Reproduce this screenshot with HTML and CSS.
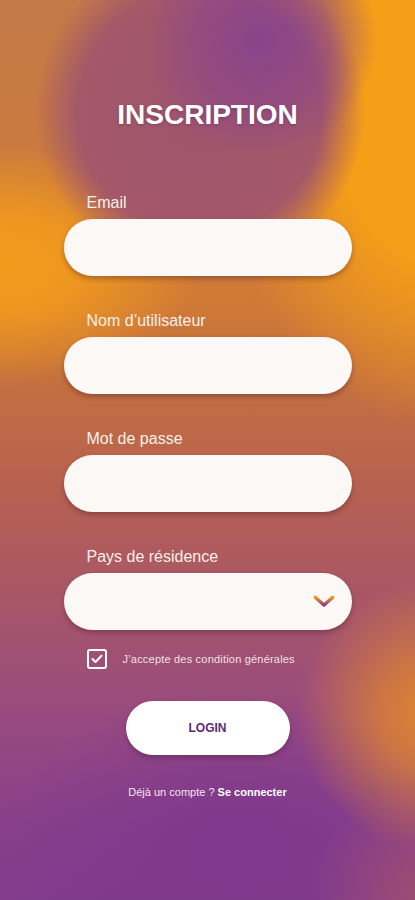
FILE: index.html
```html
<!DOCTYPE html>
<html lang="fr">
<head>
    <meta charset="UTF-8">
    <meta name="viewport" content="width=device-width, initial-scale=1.0">
    <title>Inscription</title>
    <link rel="stylesheet" href="styles.css">
</head>
<body>
    <main class="page">
        <h1 class="title">INSCRIPTION</h1>

        <form class="form">
            <div class="group">
                <label class="label" for="email">Email</label>
                <input class="field" type="email" id="email">
            </div>
            <div class="group">
                <label class="label" for="username">Nom d’utilisateur</label>
                <input class="field" type="text" id="username">
            </div>
            <div class="group">
                <label class="label" for="password">Mot de passe</label>
                <input class="field" type="password" id="password">
            </div>
            <div class="group">
                <label class="label" for="country">Pays de résidence</label>
                <div class="field select" id="country">
                    <svg width="22" height="13" viewBox="0 0 22 13">
                        <defs>
                            <linearGradient id="chev" x1="0" y1="0" x2="0" y2="1">
                                <stop offset="0" stop-color="#ec962a"/>
                                <stop offset="1" stop-color="#8b4278"/>
                            </linearGradient>
                        </defs>
                        <polyline points="2.5,2.5 11,10 19.5,2.5" fill="none" stroke="url(#chev)" stroke-width="3.6" stroke-linecap="round" stroke-linejoin="round"/>
                    </svg>
                </div>
            </div>

            <label class="terms">
                <span class="box">
                    <svg width="12" height="10" viewBox="0 0 12 10">
                        <polyline points="1.5,5 4.5,8 10.5,1.8" fill="none" stroke="#fff" stroke-width="2" stroke-linecap="round" stroke-linejoin="round"/>
                    </svg>
                </span>
                <span>J’accepte des condition générales</span>
            </label>

            <button class="login" type="button">LOGIN</button>

            <p class="account">Déjà un compte ? <a href="#">Se connecter</a></p>
        </form>
    </main>
</body>
</html>
```

FILE: styles.css
```css
html, body {
    margin: 0;
    padding: 0;
}

body {
    font-family: "Liberation Sans", Arial, sans-serif;
    color: #fff;
    min-height: 900px;
    background:
        /* purple highlight inside the top blob */
        radial-gradient(circle at 262px 40px, rgba(136, 66, 140, 0.95) 0, rgba(140, 70, 136, 0.6) 70px, rgba(150, 80, 120, 0) 115px),
        /* top blob */
        radial-gradient(circle at 200px 112px, rgba(158, 84, 110, 1) 0, rgba(164, 88, 104, 1) 122px, rgba(178, 102, 88, 0) 165px),
        /* orange on the left */
        radial-gradient(ellipse 200px 120px at 0px 265px, rgba(243, 155, 28, 1) 0, rgba(243, 155, 28, 0.85) 40%, rgba(243, 155, 28, 0) 100%),
        /* orange top right */
        radial-gradient(ellipse 230px 340px at 445px 90px, rgba(245, 158, 24, 1) 0, rgba(245, 158, 24, 1) 50%, rgba(245, 158, 24, 0) 100%),
        /* orange blob bottom right */
        radial-gradient(circle at 432px 715px, rgba(222, 134, 48, 1) 0, rgba(220, 130, 52, 0.75) 55px, rgba(220, 130, 52, 0) 135px),
        /* pink corner bottom right */
        radial-gradient(circle at 430px 900px, rgba(168, 84, 104, 0.8) 0, rgba(168, 84, 104, 0) 120px),
        /* deep purple at the bottom */
        radial-gradient(ellipse 240px 150px at 240px 840px, rgba(124, 54, 142, 0.85) 0, rgba(124, 54, 142, 0) 100%),
        linear-gradient(180deg, #c37a48 0%, #cb7a3d 20%, #d07a37 33%, #c4703f 42%, #b66052 55%, #a6556a 68%, #974a80 80%, #883f8a 92%, #823c8c 100%);
}

.page {
    width: 288px;
    margin: 0 auto;
    padding-top: 99px;
}

.title {
    margin: 0;
    font-size: 28px;
    line-height: 32px;
    font-weight: bold;
    text-align: center;
    text-shadow: 0 1px 3px rgba(60, 20, 40, 0.3);
}

.form {
    margin-top: 63px;
}

.group {
    margin-bottom: 36px;
}

.group:last-of-type {
    margin-bottom: 0;
}

.label {
    display: block;
    padding-left: 23px;
    margin-bottom: 7px;
    font-size: 16px;
    line-height: 18px;
    color: #f7efea;
}

.field {
    display: block;
    box-sizing: border-box;
    width: 100%;
    height: 57px;
    border: none;
    border-radius: 29px;
    background: #fbf8f6;
    box-shadow: 0 3px 5px rgba(70, 25, 35, 0.35);
    outline: none;
}

.select {
    display: flex;
    align-items: center;
    justify-content: flex-end;
    padding-right: 17px;
}

.terms {
    display: flex;
    align-items: center;
    gap: 16px;
    margin-top: 19px;
    padding-left: 23px;
    font-size: 11px;
    letter-spacing: 0.2px;
    color: #f0e0e6;
}

.box {
    display: flex;
    align-items: center;
    justify-content: center;
    box-sizing: border-box;
    width: 20px;
    height: 20px;
    border: 2px solid #fff;
    border-radius: 3px;
}

.login {
    display: block;
    width: 164px;
    height: 54px;
    margin: 32px auto 0;
    border: none;
    border-radius: 27px;
    background: #fff;
    box-shadow: 0 3px 5px rgba(70, 25, 55, 0.35);
    font-family: inherit;
    font-size: 12px;
    font-weight: bold;
    color: #5e2a74;
}

.account {
    margin: 30px 0 0;
    font-size: 11px;
    line-height: 14px;
    text-align: center;
    color: #f3e6f0;
}

.account a {
    color: #fff;
    font-weight: bold;
    text-decoration: none;
}
```
